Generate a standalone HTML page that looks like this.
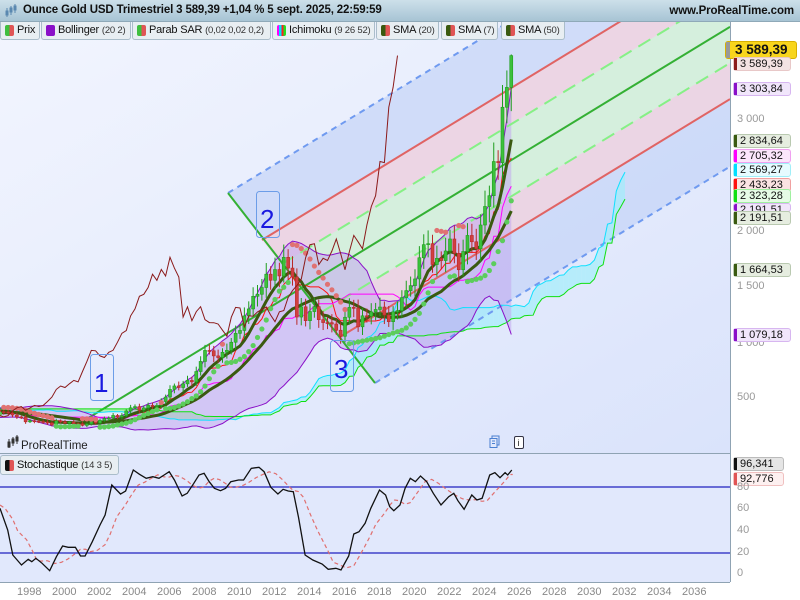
<!DOCTYPE html>
<html><head><meta charset="utf-8">
<style>
*{margin:0;padding:0;box-sizing:border-box}
body{width:800px;height:600px;overflow:hidden;background:#fff;font-family:"Liberation Sans",sans-serif;position:relative}
#hdr{position:absolute;left:0;top:0;width:800px;height:22px;background:linear-gradient(#cde0ea,#a7c4d4);border-bottom:1px solid #8fa9b8}
#hdr .t{position:absolute;left:23px;top:4px;font-size:11.5px;font-weight:bold;color:#111;letter-spacing:-0.15px}
#hdr .w{position:absolute;right:6px;top:5px;font-size:11.5px;font-weight:bold;color:#111;letter-spacing:-0.1px}
.tab{position:absolute;top:22px;height:18px;background:#e8eef2;border:1px solid #aabdca;border-top:none;border-radius:0 0 3px 3px;font-size:11px;color:#111;padding:2px 0 0 16px;white-space:nowrap;letter-spacing:-0.2px;overflow:hidden}
.tab i{position:absolute;left:4px;top:3px;width:9px;height:11px;border-radius:2px}
.tab small{font-size:9.5px;color:#333}
.lb{position:absolute;left:733px;width:58px;height:14px;font-size:11px;color:#111;border:1px solid;border-radius:3px;padding-left:6px;line-height:12px}
.lb b{position:absolute;left:0;top:0;width:3px;height:12px}
.ax{position:absolute;font-size:11px;color:#999}
.xl{position:absolute;top:586px;font-size:11px;color:#888}
</style></head><body>
<svg id="s" width="800" height="600" style="position:absolute;left:0;top:0">
<defs>
<linearGradient id="bg" x1="0" y1="0" x2="1" y2="1"><stop offset="0" stop-color="#f2f5fe"/><stop offset="1" stop-color="#dae3fb"/></linearGradient>
<clipPath id="cm"><rect x="0" y="22" width="730" height="431"/></clipPath>
<clipPath id="cs"><rect x="0" y="454" width="730" height="128"/></clipPath>
</defs>
<rect x="0" y="22" width="730" height="431" fill="url(#bg)"/>
<rect x="0" y="454" width="730" height="128" fill="#e1e8fc"/>
<g clip-path="url(#cm)">
<polygon points="228,193 730,-113 730,166.5 375,383" fill="#bccdf5" opacity="0.55"/>
<polygon points="262,240 730,-45.5 730,99.1 340,337" fill="#f3d3de" opacity="0.8"/>
<polygon points="281.5,264.25 730,-9.3 730,63 320.5,312.75" fill="#d3f2dc" opacity="0.9"/>
<g id="ind"></g>
<line x1="228" y1="193" x2="730" y2="-113" stroke="#6f9af0" stroke-width="2" stroke-dasharray="6,5"/>
<line x1="375" y1="383" x2="730" y2="166.5" stroke="#6f9af0" stroke-width="2" stroke-dasharray="6,5"/>
<line x1="262" y1="240" x2="730" y2="-45.5" stroke="#e06464" stroke-width="2"/>
<line x1="340" y1="337" x2="730" y2="99.1" stroke="#e06464" stroke-width="2"/>
<line x1="281.5" y1="264.25" x2="730" y2="-9.3" stroke="#86f086" stroke-width="2" stroke-dasharray="14,8"/>
<line x1="320.5" y1="312.75" x2="730" y2="63" stroke="#86f086" stroke-width="2" stroke-dasharray="14,8"/>
<line x1="85" y1="420" x2="730" y2="26.8" stroke="#34b034" stroke-width="2"/>
<line x1="228" y1="193" x2="375" y2="383" stroke="#34b034" stroke-width="2"/>
<g id="top"></g>
<g font-family="Liberation Sans,sans-serif" font-size="26" fill="#1a1ae0">
<rect x="90.5" y="354.5" width="23" height="46" rx="3" fill="none" stroke="#6c9de8"/><text x="94" y="392">1</text>
<rect x="256.5" y="191.5" width="23" height="46" rx="3" fill="none" stroke="#6c9de8"/><text x="260" y="228">2</text>
<rect x="330.5" y="340.5" width="23" height="51" rx="3" fill="none" stroke="#6c9de8"/><text x="334" y="378">3</text>
</g>
</g>
<line x1="0" y1="453.5" x2="730" y2="453.5" stroke="#8fa3b3"/>
<line x1="730.5" y1="22" x2="730.5" y2="582" stroke="#8fa3b3"/>
<line x1="0" y1="582.5" x2="730" y2="582.5" stroke="#8fa3b3"/>
<g clip-path="url(#cs)">
<line x1="0" y1="487" x2="730" y2="487" stroke="#2020c0" stroke-width="1.3"/>
<line x1="0" y1="553" x2="730" y2="553" stroke="#2020c0" stroke-width="1.3"/>
<path id="stR" fill="none" stroke="#e07070" stroke-width="1.2" stroke-dasharray="4,3"/>
<path id="stK" fill="none" stroke="#111" stroke-width="1.3"/>
</g>
<g transform="translate(8,439)" stroke="#333" fill="#333"><line x1="1" y1="0" x2="1" y2="9"/><rect x="0" y="3" width="2" height="5"/><line x1="5" y1="-2" x2="5" y2="7"/><rect x="4" y="0" width="2" height="4" fill="none"/><line x1="9" y1="-4" x2="9" y2="5"/><rect x="8" y="-2" width="2" height="4"/></g>
<text x="21" y="449" font-size="11.5" font-family="Liberation Sans,sans-serif" fill="#222">ProRealTime</text>
<g transform="translate(489,436)" fill="none" stroke="#4a7fd0"><rect x="3" y="0" width="7" height="9"/><rect x="1" y="2.5" width="7" height="9" fill="#e1e8fc"/><line x1="3" y1="5" x2="6" y2="5"/><line x1="3" y1="7.5" x2="6" y2="7.5"/></g>
<g transform="translate(514,436)"><rect x="0.5" y="0.5" width="9" height="12" rx="1.5" fill="#fff" stroke="#334"/><text x="3.5" y="10" font-size="9" font-family="Liberation Sans,sans-serif" fill="#222">i</text></g>
</svg>

<div id="hdr"><span class="t">Ounce Gold USD Trimestriel 3 589,39 +1,04 % 5 sept. 2025, 22:59:59</span><span class="w">www.ProRealTime.com</span></div>
<svg width="16" height="14" style="position:absolute;left:5px;top:4px"><g fill="#5a88b0" stroke="#5a88b0"><line x1="2" y1="4" x2="2" y2="13"/><rect x="1" y="7" width="2" height="4"/><line x1="6" y1="2" x2="6" y2="11"/><rect x="5" y="4" width="2" height="4"/><line x1="10" y1="0" x2="10" y2="9"/><rect x="9" y="2" width="2" height="4"/></g></svg>
<div class="tab" style="left:0;width:40px"><i style="background:linear-gradient(90deg,#3fbf3f 50%,#e05555 50%)"></i>Prix</div>
<div class="tab" style="left:41px;width:90px"><i style="background:#8a10c8"></i>Bollinger <small>(20 2)</small></div>
<div class="tab" style="left:132px;width:139px"><i style="background:linear-gradient(90deg,#3fbf3f 50%,#e05555 50%)"></i>Parab SAR <small>(0,02 0,02 0,2)</small></div>
<div class="tab" style="left:272px;width:103px"><i style="background:linear-gradient(90deg,#ff00ff 25%,#00e0ff 25%,#00e0ff 50%,#ff2020 50%,#ff2020 75%,#20e020 75%)"></i>Ichimoku <small>(9 26 52)</small></div>
<div class="tab" style="left:376px;width:63px"><i style="background:linear-gradient(90deg,#3a5a10 50%,#e05555 50%)"></i>SMA <small>(20)</small></div>
<div class="tab" style="left:441px;width:57px"><i style="background:linear-gradient(90deg,#3a5a10 50%,#e05555 50%)"></i>SMA <small>(7)</small></div>
<div class="tab" style="left:501px;width:64px"><i style="background:linear-gradient(90deg,#3a5a10 50%,#e05555 50%)"></i>SMA <small>(50)</small></div>
<div class="tab" style="left:0;top:455px;width:119px;height:20px;border-top:1px solid #aabdca;border-radius:3px;padding:3px 0 0 16px;background:#e8eef2"><i style="top:4px;background:linear-gradient(90deg,#111 50%,#e05555 50%)"></i>Stochastique <small>(14 3 5)</small></div>

<div style="position:absolute;left:725px;top:41px;width:72px;height:18px;background:#f8d51c;border:1px solid #d8b000;border-radius:3px;font-size:13.5px;font-weight:bold;color:#111;padding-left:9px;line-height:16px"><b style="position:absolute;left:0;top:0;width:4px;height:16px;background:#999"></b>3 589,39</div>
<div class="lb" style="top:57px;background:#f3e3e3;border-color:#e8c8c8"><b style="background:#8b1a1a"></b>3 589,39</div>
<div class="lb" style="top:82px;background:#f1e6fb;border-color:#d7b6f0"><b style="background:#8a10c8"></b>3 303,84</div>
<div class="ax" style="left:737px;top:113px">3 000</div>
<div class="lb" style="top:134px;background:#e6ede0;border-color:#b9c9b0"><b style="background:#3a5a10"></b>2 834,64</div>
<div class="lb" style="top:149px;background:#fbe6fb;border-color:#f0a0f0"><b style="background:#ff00ff"></b>2 705,32</div>
<div class="lb" style="top:163px;background:#e6fbff;border-color:#a0eef8"><b style="background:#00e0ff"></b>2 569,27</div>
<div class="lb" style="top:178px;background:#fbe3e3;border-color:#f0a0a0"><b style="background:#ff1010"></b>2 433,23</div>
<div class="lb" style="top:189px;background:#e6fbe6;border-color:#a0f0a0"><b style="background:#10e010"></b>2 323,28</div>
<div class="lb" style="top:203px;height:9px;overflow:hidden;background:#f1e6fb;border-color:#d7b6f0"><b style="background:#8a10c8"></b>2 191,51</div>
<div class="lb" style="top:211px;background:#e6ede0;border-color:#b9c9b0"><b style="background:#3a5a10"></b>2 191,51</div>
<div class="ax" style="left:737px;top:225px">2 000</div>
<div class="lb" style="top:263px;background:#e6ede0;border-color:#b9c9b0"><b style="background:#3a5a10"></b>1 664,53</div>
<div class="ax" style="left:737px;top:280px">1 500</div>
<div class="ax" style="left:737px;top:337px">1 000</div>
<div class="lb" style="top:328px;background:#f1e6fb;border-color:#d7b6f0"><b style="background:#8a10c8"></b>1 079,18</div>
<div class="ax" style="left:737px;top:391px">500</div>
<div class="lb" style="top:457px;width:51px;background:#e5e5e5;border-color:#bbb"><b style="background:#111"></b>96,341</div>
<div class="lb" style="top:472px;width:51px;background:#fdf0f0;border-color:#f0c0c0"><b style="background:#e05555"></b>92,776</div>
<div class="ax" style="left:737px;top:481px">80</div>
<div class="ax" style="left:737px;top:502px">60</div>
<div class="ax" style="left:737px;top:524px">40</div>
<div class="ax" style="left:737px;top:546px">20</div>
<div class="ax" style="left:737px;top:567px">0</div>
<div id="xl"></div>

<script>
var pad=[330,317,327,327,345,345,423,390,420,447,460,484,456,436,397,410,395,373,366,401,374,352,408,386,356,368,354,353,344,343,349,333,337,378,355,391,390,385,394,383,392,387,384,387,396,382,379,369,351,334,332,290];
var dat=[300,296,293,288,280,262,299,290,277,288,273,272,258,271,293,279,302,318,324,347,334,346,388,416,427,395,415,438,428,437,473,513,582,613,599,632,663,650,743,834,933,930,884,869,916,934,1007,1087,1113,1244,1307,1421,1439,1500,1620,1565,1662,1604,1772,1675,1595,1234,1326,1201,1283,1327,1210,1184,1183,1171,1115,1061,1232,1321,1315,1146,1245,1241,1280,1302,1324,1252,1192,1281,1292,1409,1472,1517,1577,1768,1886,1895,1707,1763,1743,1829,1937,1807,1660,1824,1969,1912,1849,2063,2230,2327,2635,2625,3124,3303,3589];
var C=pad.concat(dat),N=C.length,O=[],H=[],L=[];
for(var i=0;i<N;i++){var o=i?C[i-1]:C[i];O.push(o);var mx=Math.max(o,C[i]),mn=Math.min(o,C[i]);H.push(mx*(1.035+0.03*Math.abs(Math.sin(i*1.7))));L.push(mn*(0.965-0.03*Math.abs(Math.cos(i*1.3))));}
H[N-1]=3600;
function X(i){return 30+(i-52)*4.375}
function Y(p){return 454-0.111*p}
function P(a){var s="";a.forEach(function(p,k){s+=(k?"L":"M")+p[0].toFixed(1)+" "+p[1].toFixed(1)});return s}
function sma(n,i){var s=0;for(var k=i-n+1;k<=i;k++)s+=C[k];return s/n}
var ns="http://www.w3.org/2000/svg";
function el(g,t,a){var e=document.createElementNS(ns,t);for(var k in a)e.setAttribute(k,a[k]);g.appendChild(e);return e}
var G=document.getElementById("ind"),T=document.getElementById("top");
var st=44;
function hh(a,n,i){var m=-1e9;for(var k=Math.max(0,i-n+1);k<=i;k++)m=Math.max(m,a[k]);return m}
function ll(a,n,i){var m=1e9;for(var k=Math.max(0,i-n+1);k<=i;k++)m=Math.min(m,a[k]);return m}
var tk=[],kj=[],sa=[],sb=[];
for(i=0;i<N;i++){tk[i]=(hh(H,9,i)+ll(L,9,i))/2;kj[i]=(hh(H,26,i)+ll(L,26,i))/2;sa[i]=(tk[i]+kj[i])/2;sb[i]=(hh(H,52,i)+ll(L,52,i))/2;}
var A=[],B=[];for(i=st-26;i<N;i++){A.push([X(i+26),Y(sa[i])]);B.push([X(i+26),Y(sb[i])]);}
for(var j=0;j<A.length-1;j++){var up=A[j][1]<B[j][1];el(G,"polygon",{points:[A[j],A[j+1],B[j+1],B[j]].map(function(p){return p.join(",")}).join(" "),fill:up?"#9eeefb":"#8ff08f",opacity:"0.65"})}
var bu=[],bl=[];for(i=st;i<N;i++){var m=sma(20,i),v=0;for(var k=i-19;k<=i;k++)v+=(C[k]-m)*(C[k]-m);var sd=Math.sqrt(v/20);bu.push([X(i),Y(m+2*sd)]);bl.push([X(i),Y(m-2*sd)]);}
el(G,"path",{d:P(bu)+"L"+bl.slice().reverse().map(function(p){return p[0].toFixed(1)+" "+p[1].toFixed(1)}).join("L")+"Z",fill:"#c3a8ee",opacity:"0.55"});
el(T,"path",{d:P(A),fill:"none",stroke:"#10e0ff","stroke-width":1});
el(T,"path",{d:P(B),fill:"none",stroke:"#10e010","stroke-width":1});
el(T,"path",{d:P(bu),fill:"none",stroke:"#8a10c8","stroke-width":1});
el(T,"path",{d:P(bl),fill:"none",stroke:"#8a10c8","stroke-width":1});
var a1=[],a2=[];for(i=st;i<N;i++){a1.push([X(i),Y(tk[i])]);a2.push([X(i),Y(kj[i])]);}
el(T,"path",{d:P(a1),fill:"none",stroke:"#ff1010","stroke-width":1});
el(T,"path",{d:P(a2),fill:"none",stroke:"#ff00ff","stroke-width":1});
[50,20,7].forEach(function(n){var a=[];for(i=st;i<N;i++)a.push([X(i),Y(sma(n,i))]);el(T,"path",{d:P(a),fill:"none",stroke:"#3a5a10","stroke-width":3,"stroke-linejoin":"round"})});
for(i=st;i<N;i++){var up=C[i]>=O[i],col=up?"#1f9e1f":"#b82828",x=X(i);
el(T,"line",{x1:x,x2:x,y1:Y(H[i]),y2:Y(L[i]),stroke:col,"stroke-width":1});
var y1=Y(Math.max(C[i],O[i])),y2=Y(Math.min(C[i],O[i]));el(T,"rect",{x:x-1.5,y:y1,width:3,height:Math.max(1,y2-y1),fill:up?"#3cc03c":"#d04040",stroke:col,"stroke-width":0.6});}
var bull=true,sar=L[0],ep=H[0],af=0.02;
for(i=1;i<N;i++){sar=sar+af*(ep-sar);
 if(bull){sar=Math.min(sar,L[i-1]);if(L[i]<sar){bull=false;sar=ep;ep=L[i];af=0.02}else if(H[i]>ep){ep=H[i];af=Math.min(0.2,af+0.02)}}
 else{sar=Math.max(sar,H[i-1]);if(H[i]>sar){bull=true;sar=ep;ep=H[i];af=0.02}else if(L[i]<ep){ep=L[i];af=Math.min(0.2,af+0.02)}}
 if(i>=st)el(T,"circle",{cx:X(i),cy:Y(sar),r:2.6,fill:bull?"#5ccd5c":"#e07272"});}
var ch=[];for(i=st;i<N;i++)ch.push([X(i-26),Y(C[i])]);
el(T,"path",{d:P(ch),fill:"none",stroke:"#8b1a1a","stroke-width":1});
var k=[[0,235],[15,300],[25,375],[42,405],[55,388],[62,395],[70,385],[82,400],[97,422],[110,380],[122,348],[133,352],[147,352],[157,378],[166,378],[180,335],[195,285],[205,255],[218,165],[235,192],[245,183],[260,120],[272,133],[285,145],[298,140],[310,145],[320,135],[330,125],[340,150],[355,198],[365,190],[378,160],[388,135],[398,130],[408,155],[418,175],[430,182],[440,175],[450,155],[465,150],[475,150],[490,115],[505,112],[515,125],[528,172],[542,192],[552,178],[562,183],[572,185],[582,262],[595,375],[610,390],[628,402],[640,418],[655,415],[665,420],[680,378],[690,312],[700,305],[712,280],[723,235],[740,180],[752,195],[760,230],[768,242],[780,225],[790,175],[800,145],[810,155],[820,138],[832,155],[845,190],[860,225],[875,200],[885,190],[893,212],[905,238],[920,195],[930,210],[940,205],[955,135],[965,128],[975,143],[985,128],[990,135],[998,120]];
var kp=k.map(function(p){return[p[0]/1.95,p[1]/3+430]});
document.getElementById("stK").setAttribute("d",P(kp));
var rp=[[0,505]];for(j=0;j<kp.length;j++){var s=0,c=0;for(var q=Math.max(0,j-3);q<=j;q++){s+=kp[q][1];c++}rp.push([kp[j][0]+5,s/c])}
rp.pop();document.getElementById("stR").setAttribute("d",P(rp));
var xh="";for(var yr=1998;yr<=2036;yr+=2)xh+='<div class="xl" style="left:'+(28+(yr-1998)*17.5-11)+'px">'+yr+'</div>';
document.getElementById("xl").innerHTML=xh;
</script>
</body></html>
